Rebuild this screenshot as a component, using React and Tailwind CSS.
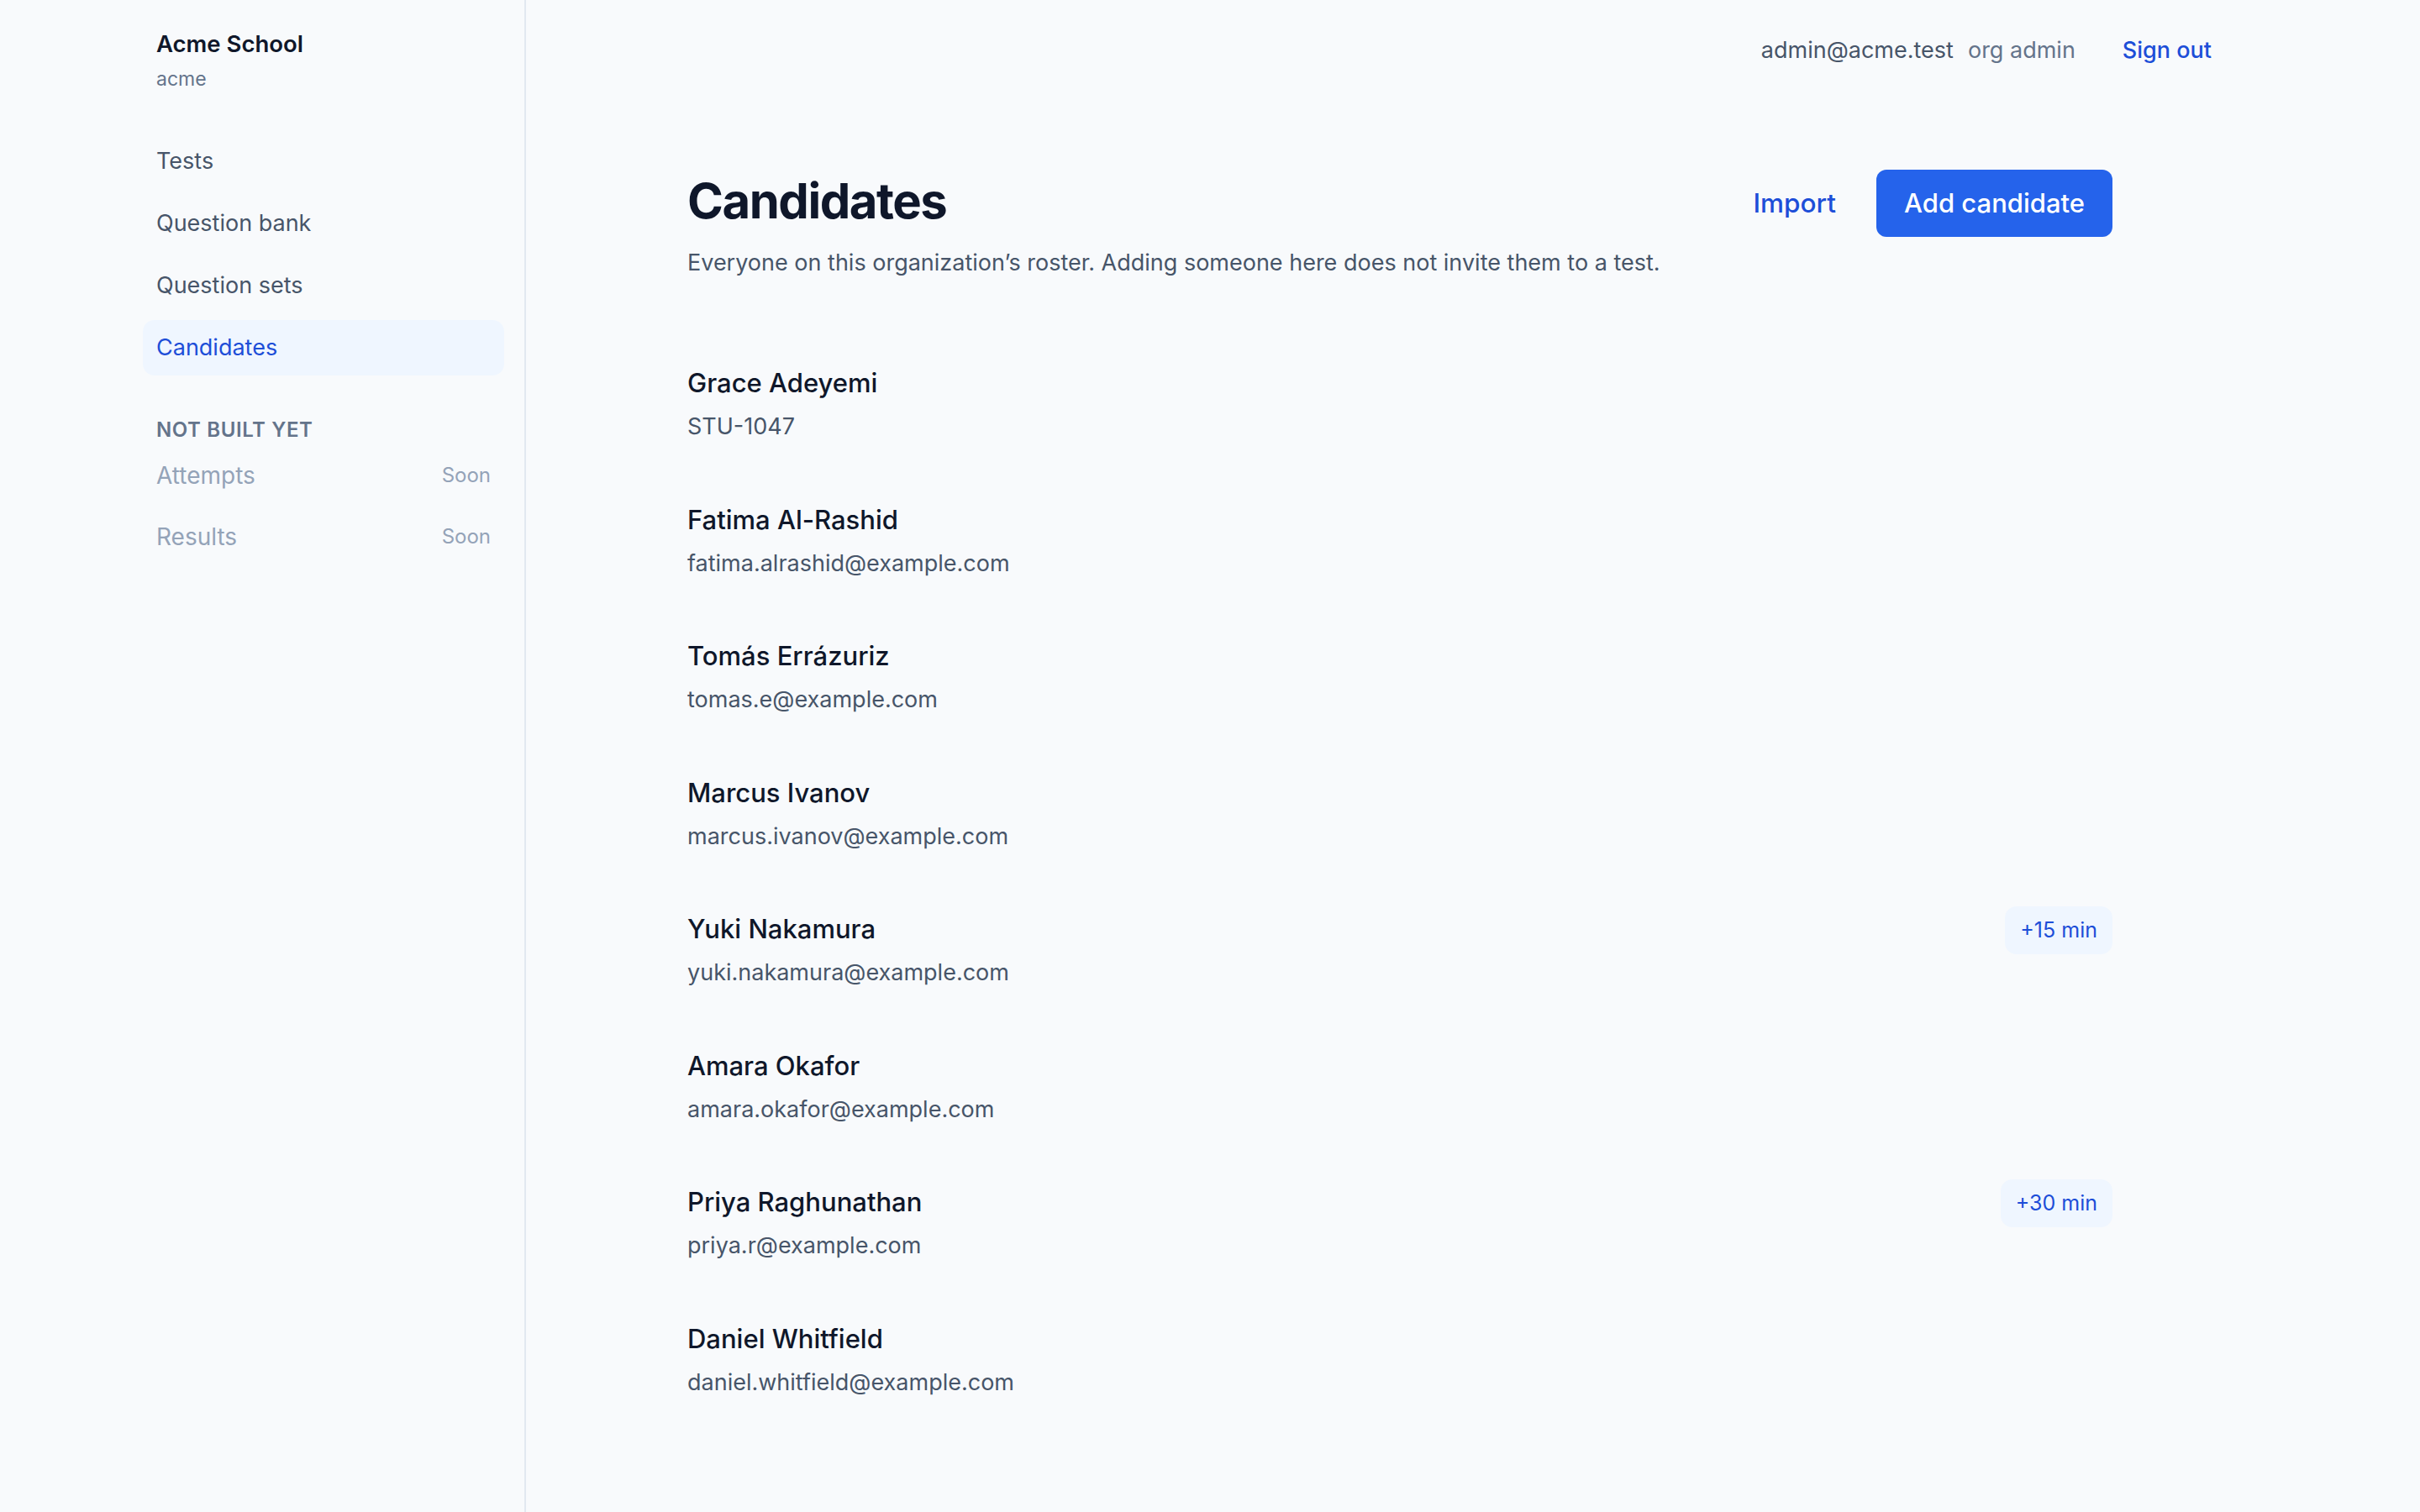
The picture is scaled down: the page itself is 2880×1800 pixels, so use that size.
import React from "react";

const candidates = [
  { name: "Grace Adeyemi", sub: "STU-1047" },
  { name: "Fatima Al-Rashid", sub: "fatima.alrashid@example.com" },
  { name: "Tomás Errázuriz", sub: "tomas.e@example.com" },
  { name: "Marcus Ivanov", sub: "marcus.ivanov@example.com" },
  { name: "Yuki Nakamura", sub: "yuki.nakamura@example.com", extra: "+15 min" },
  { name: "Amara Okafor", sub: "amara.okafor@example.com" },
  { name: "Priya Raghunathan", sub: "priya.r@example.com", extra: "+30 min" },
  { name: "Daniel Whitfield", sub: "daniel.whitfield@example.com" },
];

const navItems = ["Tests", "Question bank", "Question sets", "Candidates"];

function Sidebar() {
  return (
    <aside className="w-[626px] shrink-0 min-h-screen border-r-2 border-[#e2e8f0] bg-[#f8fafc] pl-[170px] pr-[24px] pt-[32px]">
      <div className="pl-[16px]">
        <div className="text-[27.5px] leading-[40px] font-semibold text-[#0f172a]">Acme School</div>
        <div className="mt-[6px] text-[23px] leading-[32px] text-[#64748b]">acme</div>
      </div>
      <nav className="mt-[49px] flex flex-col gap-[8px]">
        {navItems.map((item) => {
          const active = item === "Candidates";
          return (
            <a
              key={item}
              className={
                active
                  ? "flex h-[66px] items-center rounded-[14px] bg-[#eff6ff] px-[16px] text-[27px] text-[#1d4ed8]"
                  : "flex h-[66px] items-center rounded-[14px] px-[16px] text-[27px] text-[#475569]"
              }
            >
              {item}
            </a>
          );
        })}
      </nav>
      <div className="mt-[49px] pl-[16px] text-[24px] leading-[32px] font-semibold uppercase tracking-wide text-[#64748b]">
        Not built yet
      </div>
      <div className="mt-[5px] flex flex-col gap-[8px]">
        {["Attempts", "Results"].map((item) => (
          <div key={item} className="flex h-[65px] items-center justify-between px-[16px]">
            <span className="text-[28px] text-[#94a3b8]">{item}</span>
            <span className="text-[24px] text-[#94a3b8]">Soon</span>
          </div>
        ))}
      </div>
    </aside>
  );
}

function Header() {
  return (
    <header className="flex h-[120px] items-center justify-end pr-[248px] text-[27px]">
      <span className="text-[#475569]">admin@acme.test</span>
      <span className="ml-[17px] text-[#64748b]">org admin</span>
      <a className="ml-[56px] font-medium text-[#1d4ed8]">Sign out</a>
    </header>
  );
}

function CandidateRow({ c }) {
  return (
    <li className="flex items-start justify-between py-[34px]">
      <div>
        <div className="text-[31px] leading-[44px] font-medium text-[#0f172a]">{c.name}</div>
        <div className="mt-[10px] text-[27px] leading-[40.5px] text-[#475569]">{c.sub}</div>
      </div>
      {c.extra && (
        <span className="-mt-[5px] flex h-[57px] items-center rounded-[14px] bg-[#eff6ff] px-[18px] text-[25px] text-[#1d4ed8]">
          {c.extra}
        </span>
      )}
    </li>
  );
}

export default function App() {
  return (
    <div
      className="flex min-h-screen bg-[#f8fafc]"
      style={{ fontFamily: "Inter, 'Noto Sans', sans-serif" }}
    >
      <Sidebar />
      <main className="flex-1">
        <Header />
        <section className="ml-[192px] w-[1696px] pt-[82px]">
          <div className="flex items-start justify-between">
            <div>
              <h1 className="text-[58px] leading-[74px] font-bold tracking-tight text-[#0f172a]">Candidates</h1>
              <p className="mt-[17px] text-[27px] leading-[40px] text-[#475569]">
                Everyone on this organization’s roster. Adding someone here does not invite them to a test.
              </p>
            </div>
            <div className="flex items-center gap-[48px]">
              <button className="text-[31.5px] font-medium text-[#1d4ed8]">Import</button>
              <button className="flex h-[80px] items-center rounded-[12px] bg-[#2563eb] px-[33px] text-[31px] font-medium text-white">
                Add candidate
              </button>
            </div>
          </div>
          <ul className="mt-[67px]">
            {candidates.map((c) => (
              <CandidateRow key={c.name} c={c} />
            ))}
          </ul>
        </section>
      </main>
    </div>
  );
}
